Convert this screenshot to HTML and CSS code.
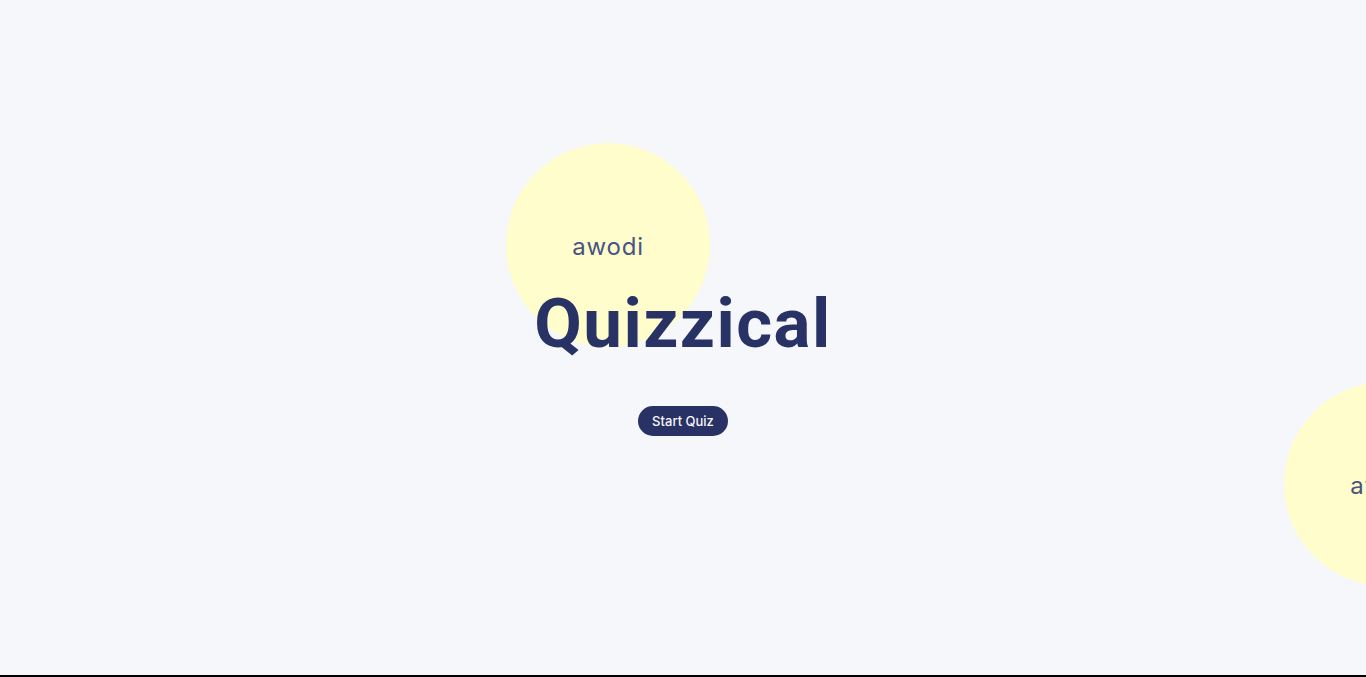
FILE: index.html
```html
<!DOCTYPE html>
<html lang="en">
<head>
<meta charset="UTF-8">
<title>Quizzical</title>
<link rel="stylesheet" href="styles.css">
</head>
<body>
<main class="page">
  <div class="blob blob-top"><span>awodi</span></div>
  <div class="blob blob-right"><span>awodi</span></div>
  <section class="intro">
    <h1 class="title">Quizzical</h1>
    <button class="start-btn">Start Quiz</button>
  </section>
</main>
</body>
</html>
```
FILE: styles.css
```css
html, body {
  margin: 0;
  padding: 0;
  background: #f5f7fb;
}
body {
  font-family: Inter, "Noto Sans", sans-serif;
  overflow: hidden;
}
.page {
  position: relative;
  height: 675px;
  border-bottom: 2px solid #000;
  overflow: hidden;
  display: flex;
  align-items: center;
  justify-content: center;
}
.blob {
  position: absolute;
  width: 204px;
  height: 204px;
  border-radius: 50%;
  background: #fffdcc;
  display: flex;
  align-items: center;
  justify-content: center;
  color: #4a5382;
  font-size: 24px;
  letter-spacing: 0.8px;
  padding-top: 2px;
  box-sizing: border-box;
}
.blob-top {
  left: 506px;
  top: 143px;
}
.blob-right {
  left: 1284px;
  top: 382px;
}
.intro {
  position: relative;
  display: flex;
  flex-direction: column;
  align-items: center;
  margin-top: 40px;
}
.title {
  margin: 0;
  padding-top: 4px;
  font-family: Roboto, Inter, sans-serif;
  font-size: 69px;
  font-weight: 700;
  letter-spacing: 1.5px;
  line-height: 80px;
  color: #293264;
}
.start-btn {
  margin-top: 42px;
  width: 90px;
  height: 30px;
  border: none;
  border-radius: 15px;
  background: #293264;
  color: #f5f7fb;
  font-family: inherit;
  font-size: 13px;
  font-weight: 500;
  padding: 0;
}
```
